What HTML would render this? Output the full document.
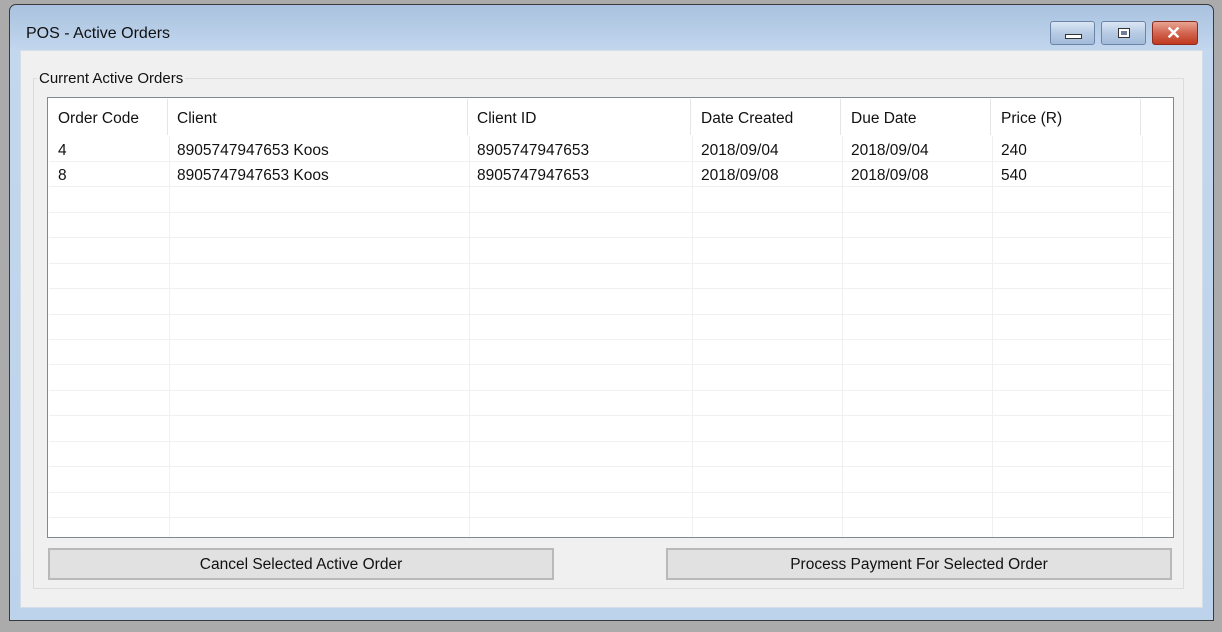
<!DOCTYPE html>
<html><head><meta charset="utf-8"><style>
*{margin:0;padding:0;box-sizing:border-box}
body{width:1222px;height:632px;background:#ababab;position:relative;overflow:hidden;font-family:"Liberation Sans",sans-serif;color:#000}
.win{position:absolute;left:9px;top:4px;width:1205px;height:617px;border:1px solid #3a3a3a;border-radius:7px 7px 0 0;background:linear-gradient(#a9c2df,#c3d7ee 46px,#bcd3eb);}
.client{position:absolute;left:20px;top:50px;width:1183px;height:558px;background:#f0f0f0;border:1px solid #d4dde8}
.title{position:absolute;left:26px;top:25px;font-size:16px;color:#111}
.a{position:absolute}
.t{position:absolute;font-size:15.5px;white-space:nowrap;color:#111}
.btn{position:absolute;height:32px;background:#e1e1e1;border:2px solid #b9b9b9;font-size:15.5px;text-align:center;line-height:30px;color:#111}
.wb{position:absolute;top:21px;height:24px;border:1px solid #6c84a6;border-radius:3px;background:linear-gradient(#dbe6f4,#b7cbe4 50%,#a3bbda)}
</style></head><body>
<div class="win"></div>
<div class="title">POS - Active Orders</div>
<div class="wb" style="left:1050px;width:45px"><div class="a" style="left:14px;top:12px;width:17px;height:5px;background:#fff;border:1px solid #333"></div></div>
<div class="wb" style="left:1101px;width:45px"><div class="a" style="left:16px;top:6px;width:12px;height:10px;border:1px solid #333;background:#fff"><div class="a" style="left:2px;top:2px;width:6px;height:4px;background:#6d7f97"></div></div></div>
<div class="wb" style="left:1152px;width:46px;border-color:#8d2b1f;background:linear-gradient(#e8a593,#d26550 50%,#c0391f)"><div class="a" style="left:13px;top:0;color:#fff;font-size:18px;font-weight:bold;line-height:22px">✕</div></div>
<div class="client"></div>
<div class="a" style="left:33px;top:78px;width:1151px;height:511px;border:1px solid #dcdcdc"></div>
<div class="t" style="left:37px;top:70px;background:#f0f0f0;padding:0 2px;font-size:15px">Current Active Orders</div>
<div class="a" style="left:47px;top:97px;width:1127px;height:441px;border:1px solid #828790;background:#fff"></div>
<div id="g"></div>
<div class="btn" style="left:48px;top:548px;width:506px">Cancel Selected Active Order</div>
<div class="btn" style="left:666px;top:548px;width:506px">Process Payment For Selected Order</div>
<script>
var g='';
var cols=[169,469,692,842,992,1142];
cols.forEach(function(x){g+='<div class="a" style="left:'+x+'px;top:136px;width:1px;height:401px;background:#f0f0f0"></div>';g+='<div class="a" style="left:'+(x-2)+'px;top:99px;width:1px;height:36px;background:#e5e5e5"></div>';});
for(var k=0;k<15;k++){var y=Math.round(161+k*25.43);g+='<div class="a" style="left:49px;top:'+y+'px;width:1123px;height:1px;background:#f0f0f0"></div>';}
var hx=[58,177,477,701,851,1001],hs=['Order Code','Client','Client ID','Date Created','Due Date','Price (R)'];
var r1=['4','8905747947653 Koos','8905747947653','2018/09/04','2018/09/04','240'];
var r2=['8','8905747947653 Koos','8905747947653','2018/09/08','2018/09/08','540'];
for(var i=0;i<6;i++){g+='<div class="t" style="left:'+hx[i]+'px;top:110px">'+hs[i]+'</div>';g+='<div class="t" style="left:'+hx[i]+'px;top:142px">'+r1[i]+'</div>';g+='<div class="t" style="left:'+hx[i]+'px;top:167px">'+r2[i]+'</div>';}
document.getElementById('g').innerHTML=g;
</script>
</body></html>
